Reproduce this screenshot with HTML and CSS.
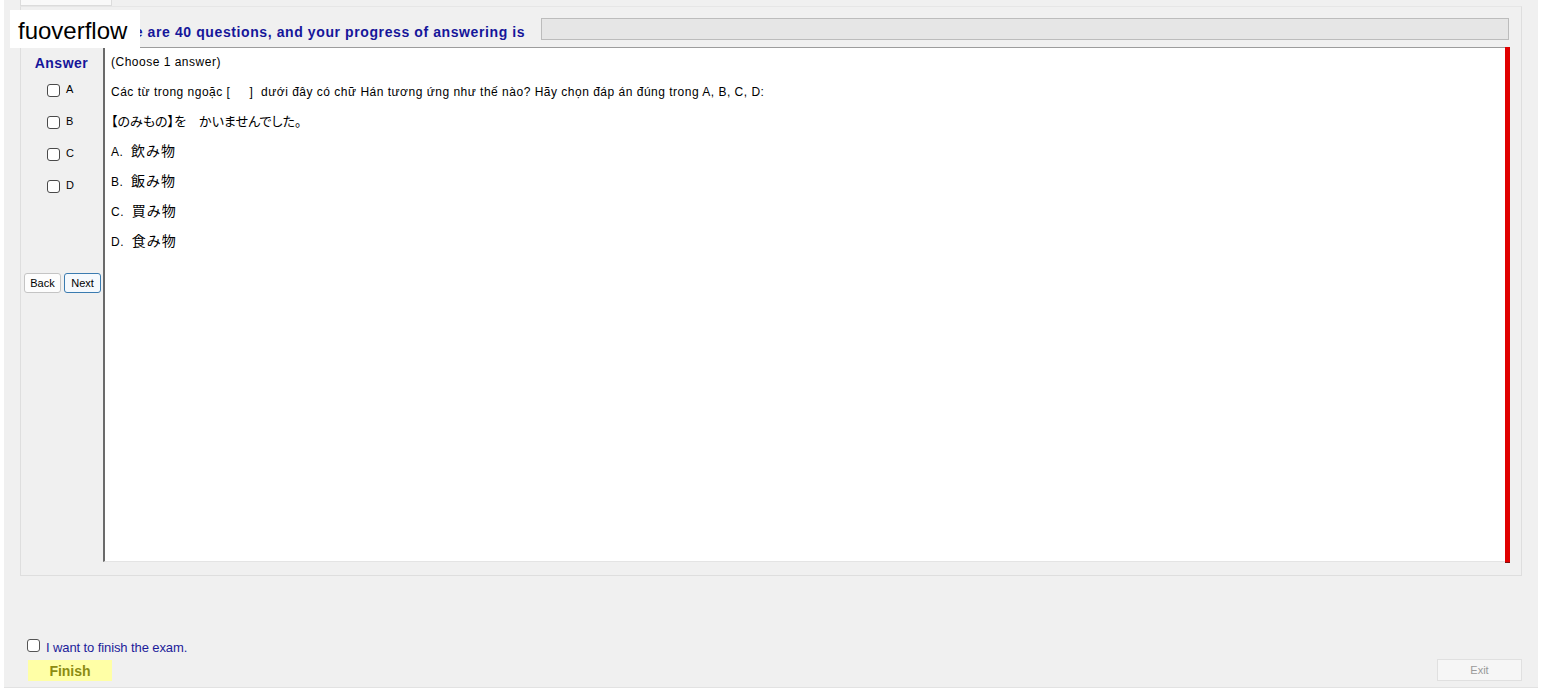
FILE: index.html
```html
<!DOCTYPE html>
<html>
<head>
<meta charset="utf-8">
<link rel="stylesheet" href="styles.css">
</head>
<body>
<div class="window">
  <div class="tab"></div>
  <div class="group">
    <div class="header">
      <span class="title">There are 40 questions, and your progress of answering is</span>
      <div class="progress"></div>
    </div>
    <div class="main">
      <div class="side">
        <div class="answer-title">Answer</div>
        <label class="opt"><input type="checkbox" class="cb"><span>A</span></label>
        <label class="opt"><input type="checkbox" class="cb"><span>B</span></label>
        <label class="opt"><input type="checkbox" class="cb"><span>C</span></label>
        <label class="opt"><input type="checkbox" class="cb"><span>D</span></label>
        <div class="nav">
          <button class="btn">Back</button>
          <button class="btn btn-focus">Next</button>
        </div>
      </div>
      <div class="content">
        <p>(Choose 1 answer)</p>
        <p>Các từ trong ngoặc [&nbsp;&nbsp;&nbsp;&nbsp;&nbsp;]&nbsp; dưới đây có chữ Hán tương ứng như thế nào? Hãy chọn đáp án đúng trong A, B, C, D:</p>
        <p class="jp">【のみもの】を　かいませんでした。</p>
        <p>A.&nbsp; <span class="kanji">飲み物</span></p>
        <p>B.&nbsp; <span class="kanji">飯み物</span></p>
        <p>C.&nbsp; <span class="kanji">買み物</span></p>
        <p>D.&nbsp; <span class="kanji">食み物</span></p>
      </div>
      <div class="redbar"></div>
    </div>
  </div>
  <div class="spacer"></div>
  <div class="bottom">
    <div class="finish-col">
      <label class="finish-check"><input type="checkbox" class="cb"><span>I want to finish the exam.</span></label>
      <button class="finish">Finish</button>
    </div>
    <button class="exit">Exit</button>
  </div>
  <div class="watermark">fuoverflow</div>
</div>
</body>
</html>
```

FILE: styles.css
```css
html, body {
  margin: 0;
  padding: 0;
  background: #ffffff;
  font-family: "Liberation Sans", Arial, "Noto Sans CJK JP", sans-serif;
  font-size: 12px;
  color: #000;
}

.window {
  position: relative;
  margin: 0 4px;
  height: 687px;
  background: #f0f0f0;
  border-bottom: 1px solid #e2e2e2;
  display: flex;
  flex-direction: column;
}

.tab {
  margin-left: 16px;
  width: 90px;
  height: 5px;
  background: #f9f9f9;
  border: 1px solid #dcdcdc;
  border-top: none;
}

.group {
  margin: 0 16px 0 16px;
  height: 570px;
  border: 1px solid #dedede;
  border-top-color: #e6e6e6;
  box-sizing: border-box;
  display: flex;
  flex-direction: column;
  padding-left: 1px;
}

.header {
  display: flex;
  align-items: center;
  height: 23px;
  margin-top: 10px;
  padding-left: 80px;
  padding-right: 12px;
}

.title {
  font-weight: bold;
  font-size: 14px;
  letter-spacing: 0.6px;
  color: #16169a;
  white-space: nowrap;
  margin-top: 6px;
}

.progress {
  margin-left: 16px;
  flex: 1;
  height: 20px;
  background: #e6e6e6;
  border: 1px solid #bcbcbc;
}

.main {
  display: flex;
  margin-top: 7px;
  height: 515px;
}

.side {
  width: 81px;
  display: flex;
  flex-direction: column;
  align-items: stretch;
}

.answer-title {
  font-weight: bold;
  font-size: 14px;
  letter-spacing: 0.5px;
  color: #16169a;
  text-align: center;
  margin-top: 8px;
  height: 21px;
  padding-right: 2px;
}

.opt {
  display: flex;
  align-items: center;
  height: 32px;
  padding-left: 25px;
  font-size: 11px;
}

.side .opt:first-of-type {
  margin-top: -2px;
}

.opt span {
  margin-left: 6px;
  margin-top: -3px;
}

.cb {
  appearance: none;
  -webkit-appearance: none;
  width: 13px;
  height: 13px;
  margin: 0;
  border: 1px solid #4a4a4a;
  border-radius: 3px;
  background: #fff;
  box-sizing: border-box;
}

.nav {
  display: flex;
  gap: 3px;
  margin-top: 71px;
  padding-left: 2px;
}

.btn {
  width: 37px;
  height: 20px;
  padding: 0;
  font-family: "Liberation Sans", Arial, sans-serif;
  font-size: 11px;
  color: #000;
  background: #fdfdfd;
  border: 1px solid #c4c4c4;
  border-radius: 3px;
}

.btn-focus {
  border: 1px solid #3a7bb0;
  background: #f5f9fd;
}

.content {
  flex: 1;
  background: #fff;
  border-left: 2px solid #6a6a6a;
  border-top: 1px solid #9c9c9c;
  border-bottom: 1px solid #e4e4e4;
  padding-left: 6px;
  box-sizing: border-box;
}

.content p {
  margin: 0;
  height: 30px;
  line-height: 28px;
  white-space: nowrap;
  letter-spacing: 0.5px;
}

.content p.jp {
  font-family: "Noto Sans CJK JP", sans-serif;
  font-size: 13px;
  letter-spacing: 0;
  font-feature-settings: "palt" 1;
  line-height: 26px;
}

.kanji {
  font-family: "Noto Sans CJK JP", sans-serif;
  font-size: 14px;
  letter-spacing: 1px;
  line-height: 1;
}

.redbar {
  width: 5px;
  background: #e00000;
  margin-right: 11px;
  height: 516px;
  border-bottom: 1px solid #7a1010;
  box-sizing: border-box;
}

.spacer {
  flex: 1;
}

.bottom {
  display: flex;
  justify-content: space-between;
  align-items: flex-end;
  padding: 0 16px 6px 23px;
}

.finish-col {
  display: flex;
  flex-direction: column;
}

.finish-check {
  display: flex;
  align-items: center;
  gap: 6px;
  font-size: 13px;
  color: #1c1c9a;
  height: 16px;
  letter-spacing: -0.1px;
  margin-bottom: 2px;
}

.finish-check .cb {
  border-color: #555;
  margin-top: -2px;
}

.finish-check span {
  margin-top: 3px;
}

.finish {
  margin-top: 4px;
  margin-left: 1px;
  width: 84px;
  height: 21px;
  padding: 0;
  border: none;
  background: #ffffa6;
  color: #8c8c12;
  font-family: "Liberation Sans", Arial, sans-serif;
  font-weight: bold;
  font-size: 14px;
  text-align: center;
}

.exit {
  width: 85px;
  height: 22px;
  padding: 0;
  background: #f6f6f6;
  border: 1px solid #e0e0e0;
  color: #9a9a9a;
  font-family: "Liberation Sans", Arial, sans-serif;
  font-size: 11px;
}

.watermark {
  position: absolute;
  left: 6px;
  top: 10px;
  width: 130px;
  height: 38px;
  background: #ffffff;
  font-family: "Liberation Sans", Arial, sans-serif;
  font-size: 24px;
  line-height: 42px;
  color: #000;
  padding-left: 8px;
  box-sizing: border-box;
}
```
